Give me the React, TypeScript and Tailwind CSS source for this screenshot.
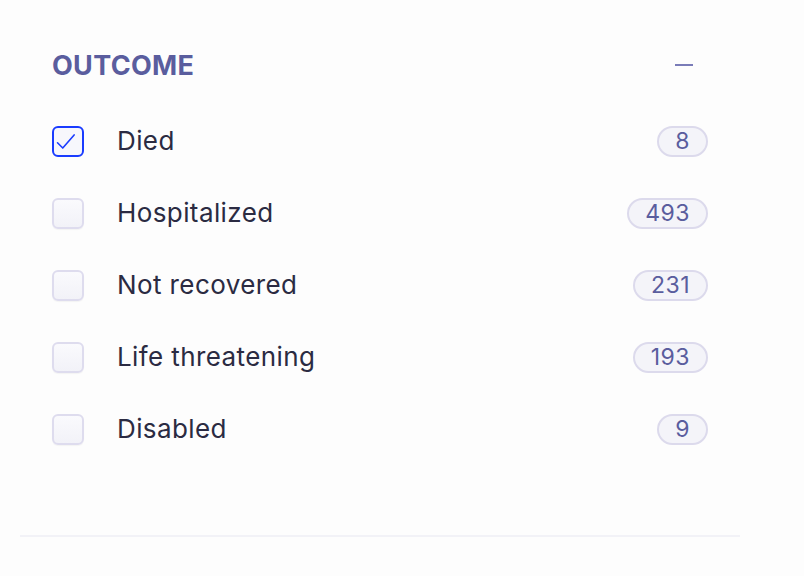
import React from "react";

const items = [
  { label: "Died", count: 8, checked: true },
  { label: "Hospitalized", count: 493, checked: false },
  { label: "Not recovered", count: 231, checked: false },
  { label: "Life threatening", count: 193, checked: false },
  { label: "Disabled", count: 9, checked: false },
];

function Checkbox({ checked }: { checked: boolean }) {
  if (checked) {
    return (
      <div className="w-[32px] h-[31px] rounded-[6px] border-2 border-[#1a3cff] bg-[#f7f7fc] flex items-center justify-center shrink-0">
        <svg width="32" height="31" viewBox="0 0 32 31">
          <path d="M4 17 L10 23 L23 8" fill="none" stroke="#1a3cff" strokeWidth="1.8" strokeLinecap="round" strokeLinejoin="round" />
        </svg>
      </div>
    );
  }
  return (
    <div className="w-[32px] h-[31px] rounded-[6px] border-2 border-[#dedcee] bg-gradient-to-b from-[#fafafd] to-[#f2f2f8] shadow-[0_1px_1px_rgba(0,0,0,0.04)] shrink-0" />
  );
}

export default function App() {
  return (
    <div className="w-[804px] h-[576px] bg-[#fdfdfd] pt-[49px]" style={{ fontFamily: "Inter, 'Noto Sans', sans-serif" }}>
      <div className="ml-[20px] w-[720px]">
        <div className="px-8">
          <div className="flex items-center justify-between h-[32px]">
            <span className="text-[27px] font-bold tracking-[0.3px] text-[#5a5d9e] leading-none">OUTCOME</span>
            <div className="w-[18px] h-[2.5px] bg-[#7a7cb8] mr-[15px]" />
          </div>
          <div className="mt-[24px] pb-[70px]">
            {items.map((it) => (
              <div key={it.label} className="flex items-center h-[72px]">
                <Checkbox checked={it.checked} />
                <span className="ml-[33px] text-[26px] tracking-[0.4px] text-[#2b2b42] leading-none">{it.label}</span>
                <div className="ml-auto h-[31px] px-[16px] rounded-full border-2 border-[#dcdaec] bg-[#f4f4f9] flex items-center text-[23px] tracking-[0.5px] text-[#5a5d9e] leading-none">
                  {it.count}
                </div>
              </div>
            ))}
          </div>
        </div>
        <div className="h-[2px] bg-[#f2f2f7]" />
      </div>
    </div>
  );
}
